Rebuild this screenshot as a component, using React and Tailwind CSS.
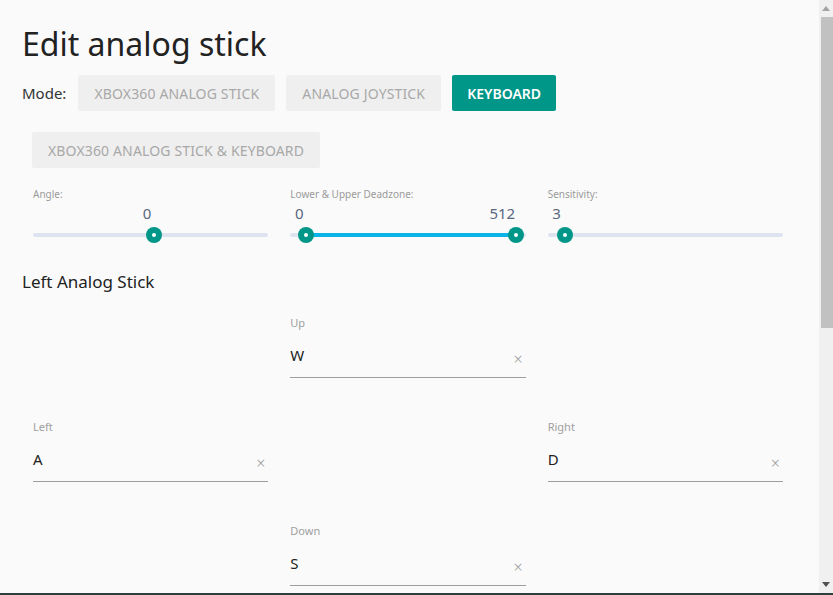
import React from "react";

const font = { fontFamily: '"Noto Sans", "Open Sans", sans-serif' };

function ModeButton({ label, active }) {
  return (
    <button
      className={
        active
          ? "h-9 px-[15px] rounded-[2px] bg-[#009688] text-white text-[14px] font-semibold uppercase"
          : "h-9 px-4 rounded-[2px] bg-[#efefef] text-[#a8a8a8] text-[14px] tracking-[0.15px] uppercase"
      }
    >
      {label}
    </button>
  );
}

function Thumb({ left }) {
  return (
    <span
      className="absolute top-1/2 w-4 h-4 -ml-2 -mt-2 rounded-full bg-[#009688] flex items-center justify-center"
      style={{ left }}
    >
      <span className="w-1 h-1 rounded-full bg-white" />
    </span>
  );
}

function Slider({ label, values, thumbs, range }) {
  return (
    <div>
      <div className="text-[10px] text-[#9a9a9a] h-[14px] leading-[14px]">{label}</div>
      <div className="relative h-[22px] mt-[1px] text-[15px] leading-[22px] text-[#5a6780]">
        {values.map((v, i) => (
          <span key={i} className="absolute top-0 -translate-x-1/2" style={{ left: v.left }}>
            {v.text}
          </span>
        ))}
      </div>
      <div className="relative h-1 mt-[9px] rounded-full bg-[#dde3ef]">
        {range && (
          <div
            className="absolute top-0 h-1 bg-[#0cb3e6]"
            style={{ left: range[0], width: range[1] - range[0] }}
          />
        )}
        {thumbs.map((t, i) => (
          <Thumb key={i} left={t} />
        ))}
      </div>
    </div>
  );
}

function KeyInput({ label, value }) {
  return (
    <div>
      <div className="text-[11px] text-[#a0a0a0] h-[16px] leading-[16px]">{label}</div>
      <div className="relative h-[47px] pt-[14px] border-b border-[#9e9e9e]">
        <span className="block text-[15px] text-[#222] leading-[20px]">{value}</span>
        <span className="absolute right-[3px] top-[20px] text-[16px] text-[#9a9a9a] leading-[16px] font-light">×</span>
      </div>
    </div>
  );
}

export default function App() {
  return (
    <div className="w-[833px] h-[595px] flex flex-col bg-[#fafafa] overflow-hidden" style={font}>
      <div className="flex flex-1 min-h-0">
        <div className="w-[819px] overflow-hidden">
          <h1 className="pl-[22px] pt-[24px] text-[32px] leading-[40px] text-[#222]">Edit analog stick</h1>

          <div className="flex flex-wrap items-center pl-[22px] pt-[11px] gap-x-[11px] gap-y-[21px] w-[600px]">
            <span className="text-[15px] text-[#333] mr-[1px]">Mode:</span>
            <ModeButton label="Xbox360 analog stick" />
            <ModeButton label="Analog joystick" />
            <ModeButton label="Keyboard" active />
            <div className="w-full flex pl-[10px]">
              <ModeButton label="Xbox360 analog stick & keyboard" />
            </div>
          </div>

          <div className="ml-[33px] w-[750px] grid grid-cols-3 gap-x-[22px] mt-[19px]">
            <Slider
              label="Angle:"
              values={[{ text: "0", left: 114 }]}
              thumbs={[121]}
            />
            <Slider
              label="Lower & Upper Deadzone:"
              values={[
                { text: "0", left: 9 },
                { text: "512", left: 212 },
              ]}
              thumbs={[16, 226]}
              range={[16, 226]}
            />
            <Slider
              label="Sensitivity:"
              values={[{ text: "3", left: 9 }]}
              thumbs={[17]}
            />
          </div>

          <h2 className="pl-[22px] mt-[33px] text-[17px] leading-[24px] text-[#222]">Left Analog Stick</h2>

          <div className="ml-[33px] w-[750px] grid grid-cols-3 gap-x-[22px] gap-y-[41px] mt-[21px]">
            <div />
            <KeyInput label="Up" value="W" />
            <div />
            <KeyInput label="Left" value="A" />
            <div />
            <KeyInput label="Right" value="D" />
            <div />
            <KeyInput label="Down" value="S" />
            <div />
          </div>
        </div>

        <div className="w-[14px] bg-[#f0f0f0] flex flex-col items-center">
          <div className="h-[17px] flex items-center justify-center">
            <svg width="8" height="5" viewBox="0 0 8 5">
              <path d="M0 5 L4 0 L8 5 Z" fill="#a3a3a3" />
            </svg>
          </div>
          <div className="w-[12px] ml-[2px] h-[311px] bg-[#c1c1c1]" />
          <div className="flex-1" />
          <div className="h-[17px] flex items-center justify-center">
            <svg width="8" height="5" viewBox="0 0 8 5">
              <path d="M0 0 L8 0 L4 5 Z" fill="#505050" />
            </svg>
          </div>
        </div>
      </div>
      <div className="h-[2px] bg-[#2c3f3c]" />
    </div>
  );
}
